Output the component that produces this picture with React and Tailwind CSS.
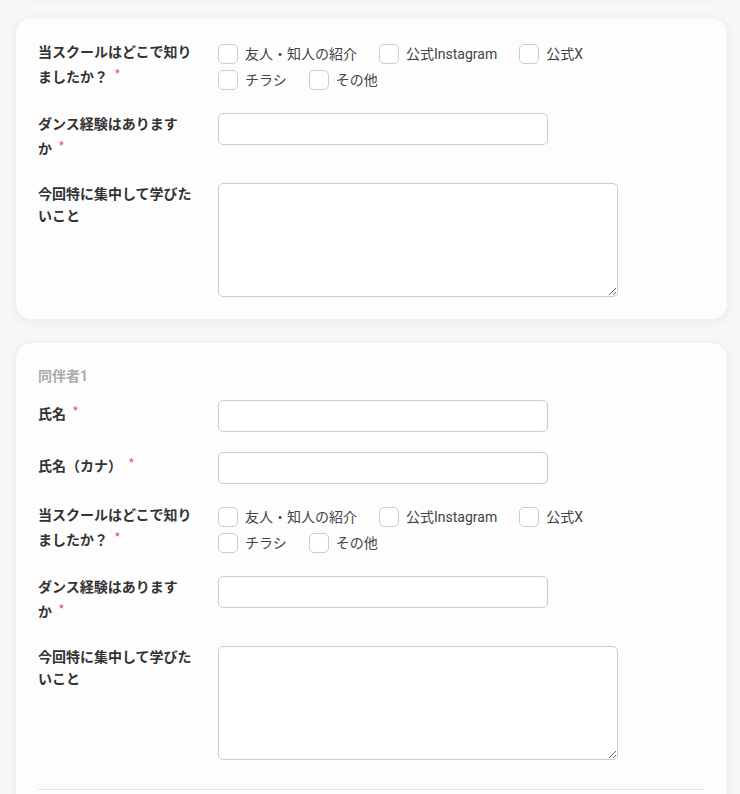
import React from 'react';

const sources = ['友人・知人の紹介', '公式Instagram', '公式X', 'チラシ', 'その他'];

// keeps the last character and the required mark on the same line
const Label = ({ text, required }) => {
    if (!required) return text;
    return (
        <>
            {text.slice(0, -1)}
            <span className="whitespace-nowrap">
                {text.slice(-1)}
                <span className="inline-block ml-[7px] pt-[5px] align-[5px] leading-none text-[11px] font-normal text-[#e0457b]">*</span>
            </span>
        </>
    );
};

const Row = ({ label, required, children }) => (
    <div className="flex items-start mb-5 last:mb-0">
        <div className="w-[180px] shrink-0 pr-4 pb-[3px] text-sm font-bold leading-[22px] text-[#333]">
            <Label text={label} required={required} />
        </div>
        <div className="flex-1">{children}</div>
    </div>
);

const TextInput = () => (
    <input type="text" className="block w-[330px] h-8 px-2 border border-[#cccccc] rounded-[5px] bg-white text-sm outline-none" />
);

const TextArea = () => (
    <textarea className="block w-[400px] h-[114px] px-2 py-1 border border-[#cccccc] rounded-[5px] bg-white text-sm outline-none" />
);

const SourceChecks = () => (
    <div className="flex flex-wrap w-[400px] gap-x-[22px]">
        {sources.map(s => (
            <label key={s} className="inline-flex items-center h-[26px] gap-[7px] text-sm text-[#444] cursor-pointer">
                <input type="checkbox" className="appearance-none w-5 h-5 border border-[#cccccc] rounded-[5px] bg-white" />
                <span>{s}</span>
            </label>
        ))}
    </div>
);

const CommonFields = () => (
    <>
        <Row label="当スクールはどこで知りましたか？" required>
            <SourceChecks />
        </Row>
        <Row label="ダンス経験はありますか" required>
            <TextInput />
        </Row>
        <Row label="今回特に集中して学びたいこと">
            <TextArea />
        </Row>
    </>
);

const cardClass = 'ml-[15px] w-[713px] bg-[#fdfdfd] border border-[#efefef] rounded-2xl shadow-[0_2px_8px_rgba(0,0,0,0.06)]';

export default function App() {
    return (
        <div className="min-h-[794px] overflow-hidden bg-[#f7f7f7] font-[Roboto,'Noto_Sans_CJK_JP',sans-serif]">
            <div className="flex flex-col gap-[22px]">
                {/* tail of the previous card */}
                <div className={`${cardClass} h-[40px] -mt-[45px]`} />

                {/* applicant */}
                <div className={`${cardClass} pt-[23px] pb-[22px] px-[22px]`}>
                    <CommonFields />
                </div>

                {/* companion 1 */}
                <div className={`${cardClass} pt-[23px] pb-[40px] px-[22px]`}>
                    <h3 className="text-sm font-bold leading-5 text-[#aaaaaa] mb-[14px]">同伴者1</h3>
                    <Row label="氏名" required>
                        <TextInput />
                    </Row>
                    <Row label="氏名（カナ）" required>
                        <TextInput />
                    </Row>
                    <CommonFields />
                    <hr className="mt-[29px] border-0 border-t border-[#e5e5e5]" />
                    <div className="h-10" />
                </div>
            </div>
        </div>
    );
}
